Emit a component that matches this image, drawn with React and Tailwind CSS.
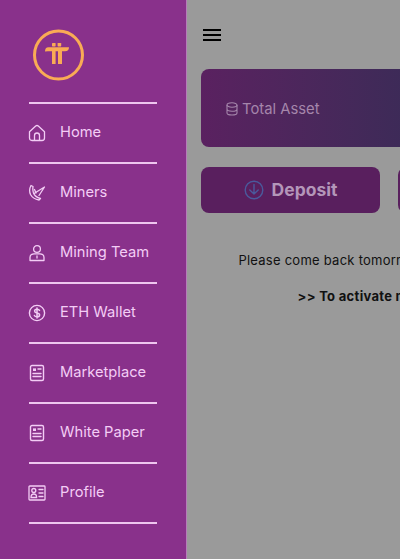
const Home = () => (
  <svg width="18" height="18" viewBox="0 0 18 18" fill="none" stroke="currentColor" strokeWidth="1.3" strokeLinejoin="round">
    <path d="M1.5 7.8 L7.7 2 Q9 1 10.3 2 L16.5 7.8 V14 Q16.5 16.5 14 16.5 H4 Q1.5 16.5 1.5 14 Z" />
    <path d="M6.5 16.5 V11.5 Q6.5 9 9 9 Q11.5 9 11.5 11.5 V16.5" />
  </svg>
);

const Miner = () => (
  <svg width="18" height="18" viewBox="0 0 18 18" fill="none" stroke="currentColor" strokeWidth="1.3" strokeLinecap="round" strokeLinejoin="round">
    <path d="M3 1.5 Q0.5 6 2.5 10.5 Q5 15 11 16 L12.5 14.5 Q7 13 5.5 9 Q4.5 6 5 2.5 Z" />
    <path d="M6 9.5 L16.5 3 L11 11.5" />
    <path d="M8 9 L6.5 5.5" />
  </svg>
);

const Team = () => (
  <svg width="18" height="18" viewBox="0 0 18 18" fill="none" stroke="currentColor" strokeWidth="1.3" strokeLinecap="round" strokeLinejoin="round">
    <circle cx="9" cy="5" r="3.4" />
    <path d="M2 16.5 V13.5 Q2 10 6 9.8 H12 Q16 10 16 13.5 V16.5 Z" />
    <path d="M9 12 V14" />
  </svg>
);

const Dollar = () => (
  <svg width="18" height="18" viewBox="0 0 18 18" fill="none" stroke="currentColor" strokeLinecap="round">
    <circle cx="9" cy="9" r="7.6" strokeWidth="1.4" />
    <path d="M11.5 6.4 Q10.8 5.2 9 5.2 Q6.6 5.2 6.6 7 Q6.6 8.5 9 9 Q11.6 9.5 11.6 11 Q11.6 12.8 9 12.8 Q7 12.8 6.4 11.5 M9 4 V14" strokeWidth="1.5" />
  </svg>
);

const Paper = () => (
  <svg width="18" height="18" viewBox="0 0 18 18" fill="none" stroke="currentColor" strokeWidth="1.4" strokeLinecap="round">
    <rect x="2.5" y="1.5" width="13" height="15" rx="1.5" />
    <rect x="5" y="4.4" width="3" height="2.6" fill="currentColor" stroke="none" />
    <path d="M10 5 H13 M5 9.5 H13 M5 12.5 H13" />
  </svg>
);

const Card = () => (
  <svg width="18" height="18" viewBox="0 0 18 18" fill="none" stroke="currentColor" strokeWidth="1.3" strokeLinecap="round">
    <rect x="1" y="2" width="16" height="14" rx="0.8" />
    <circle cx="5.8" cy="6.5" r="2" />
    <path d="M3 13.5 Q3 10 5.8 10 Q8.6 10 8.6 13.5 Z" />
    <path d="M11 5.5 H15 M11 9 H15 M11 12.5 H15" />
  </svg>
);

const items = [
  { label: "Home", icon: <Home /> },
  { label: "Miners", icon: <Miner /> },
  { label: "Mining Team", icon: <Team /> },
  { label: "ETH Wallet", icon: <Dollar /> },
  { label: "Marketplace", icon: <Paper /> },
  { label: "White Paper", icon: <Paper /> },
  { label: "Profile", icon: <Card /> },
];

const App = () => {
  return (
    <div className="flex w-[400px] h-[559px] overflow-hidden bg-[#9a9a9a] font-['Inter',sans-serif]">
      {/* Sidebar */}
      <div className="w-[187px] shrink-0 h-full bg-[#89318b] pl-[29px] border-r border-[#b77cb9]">
        <div className="pt-[29px] pl-[4px] pb-[21px]">
          <svg width="52" height="52" viewBox="0 0 52 52" fill="none">
            <circle cx="25.5" cy="26" r="24" stroke="#f9ab55" strokeWidth="3" />
            <g fill="#f9ab55">
              <rect x="19" y="14" width="3.6" height="3.4" rx="0.6" />
              <rect x="24.6" y="14" width="3.6" height="3.4" rx="0.6" />
              <path d="M12 22.5 Q12 18.2 15.5 18.2 H36 Q36 22.3 32 22.3 H29 V35 H25 V22.3 H22.6 V35 H19 V22.3 H15 Q13 22.3 12 22.5 Z" />
            </g>
          </svg>
        </div>
        <div className="w-[128px] border-t-2 border-[#eec6ef]">
          {items.map((item) => (
            <div key={item.label} className="flex items-center h-[60px] pb-px border-b-2 border-[#eec6ef] text-[#f3cdf5]">
              <span className="w-[32px] -ml-px shrink-0">{item.icon}</span>
              <span className="text-[14.7px] whitespace-nowrap">{item.label}</span>
            </div>
          ))}
        </div>
      </div>

      {/* Main content */}
      <div className="w-[400px] shrink-0 pl-[14px] pr-[16px]">
        <div className="pt-[29px] pl-[2px] flex flex-col gap-[3px] h-[69px]">
          <div className="w-[18px] h-[2px] bg-black"></div>
          <div className="w-[18px] h-[2px] bg-black"></div>
          <div className="w-[18px] h-[2px] bg-black"></div>
        </div>

        <div className="w-[370px] h-[78px] pt-[2px] rounded-lg bg-gradient-to-r from-[#5a2160] to-[#1f2e51] flex items-center pl-[25px] text-[#a586ab] text-[14.8px] gap-[4px]">
          <svg width="12" height="14" viewBox="0 0 12 14" fill="none" stroke="currentColor" strokeWidth="1.1">
            <ellipse cx="6" cy="3" rx="5" ry="2.2" />
            <path d="M1 3 V11 Q1 13 6 13 Q11 13 11 11 V3 M1 7 Q1 9.2 6 9.2 Q11 9.2 11 7" />
          </svg>
          <span>Total Asset</span>
        </div>

        <div className="flex gap-[18px] mt-[20px]">
          <div className="w-[179px] h-[46px] rounded-lg bg-[#591f5e] flex items-center justify-center gap-[8px] text-[#b496b9] text-[17.5px] font-bold">
            <svg width="20" height="20" viewBox="0 0 20 20" fill="none" stroke="#4a5a9c" strokeWidth="1.4" strokeLinecap="round" strokeLinejoin="round">
              <circle cx="10" cy="10" r="8.8" />
              <path d="M10 4.5 V14 M5.8 10 L10 14 L14.2 10" />
            </svg>
            <span>Deposit</span>
          </div>
          <div className="w-[173px] h-[46px] rounded-lg bg-[#591f5e]"></div>
        </div>

        <p className="mt-[38px] pl-[8px] text-center text-[13px] leading-[18px] tracking-[0.25px] text-[#111] whitespace-nowrap">
          Please come back tomorrow to continue mining
        </p>
        <p className="mt-[18px] pl-[10px] text-center text-[13px] leading-[18px] tracking-[0.3px] font-bold text-[#111] whitespace-nowrap">
          {">> To activate mining now <"}
        </p>
      </div>
    </div>
  );
};

export default App;
